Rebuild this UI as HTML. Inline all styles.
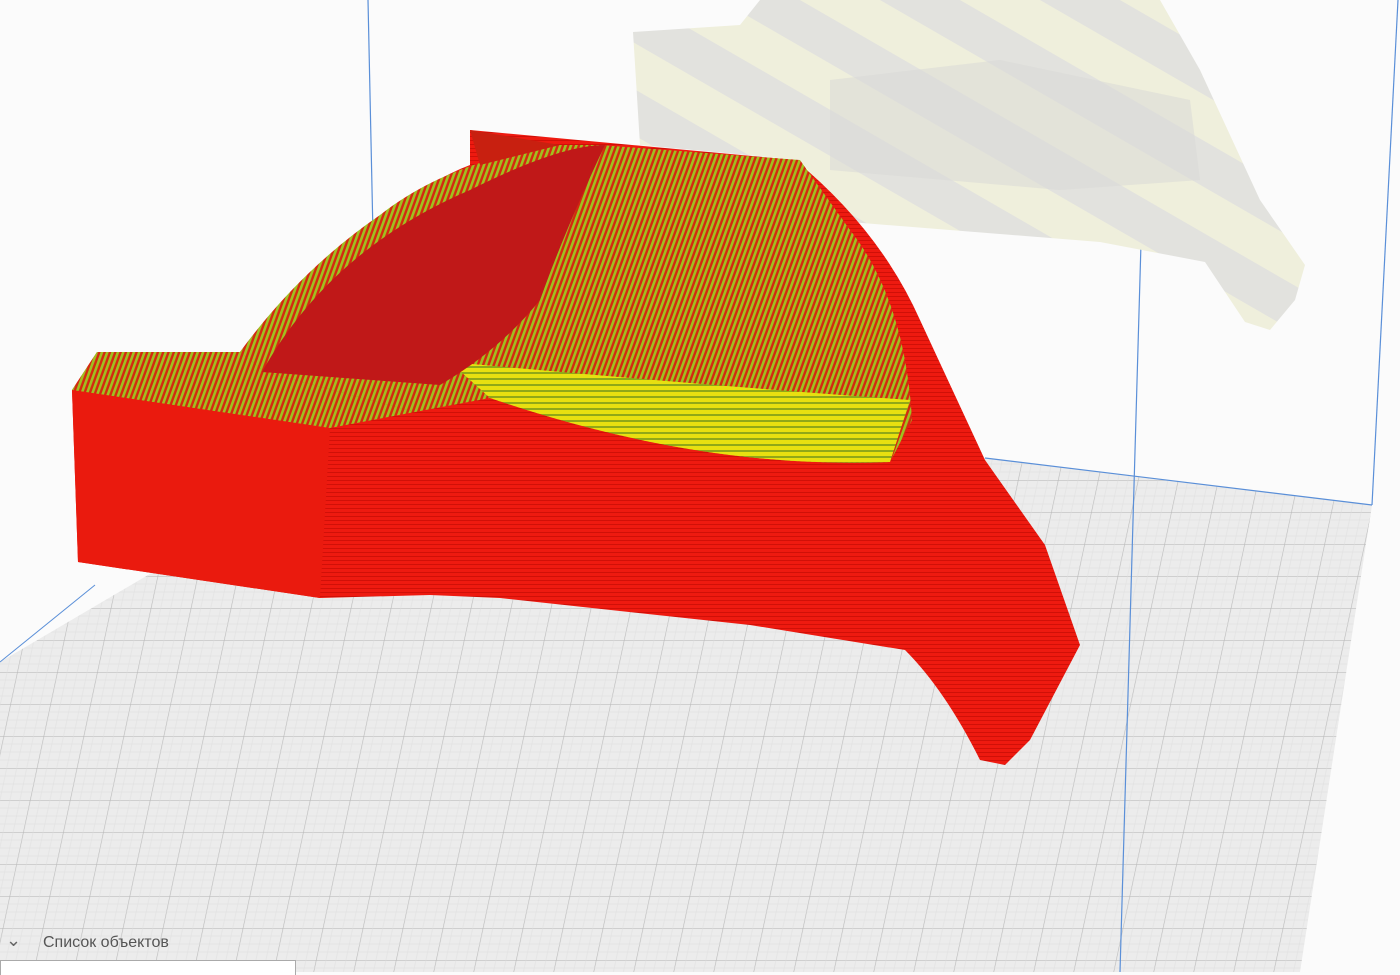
<!DOCTYPE html>
<html><head><meta charset="utf-8"><style>
html,body{margin:0;padding:0;width:1400px;height:972px;overflow:hidden;background:#fbfbfb;font-family:"Liberation Sans",sans-serif}
svg{position:absolute;left:0;top:0}
.lbl{position:absolute;left:43px;top:934px;font-size:16px;color:#555}
.chev{position:absolute;left:6px;top:930px;font-size:18px;color:#666}
.box{position:absolute;left:0;top:960px;width:294px;height:14px;border:1px solid #aaa;border-bottom:none;background:#fff}
</style></head><body>
<svg width="1400" height="972" viewBox="0 0 1400 972">
<defs>
<pattern id="grid" width="40" height="32" patternUnits="userSpaceOnUse" patternTransform="skewX(-12)">
<rect width="40" height="32" fill="#ececec"/>
<path d="M0 0H40M0 0V32" stroke="#bcbcbc" stroke-width="1.3"/>
<path d="M0 8H40M0 16H40M0 24H40M10 0V32M20 0V32M30 0V32" stroke="#dedede" stroke-width="0.5"/>
</pattern>
<pattern id="hatch" width="5" height="5" patternUnits="userSpaceOnUse" patternTransform="rotate(20)">
<rect width="5" height="5" fill="#d42810"/>
<rect width="2.6" height="5" fill="#a0c020"/>
</pattern>
<pattern id="yel" width="6" height="6" patternUnits="userSpaceOnUse">
<rect width="6" height="6" fill="#e8e010"/>
<rect width="6" height="2" fill="#90a818"/>
</pattern>
<pattern id="red" width="4" height="4" patternUnits="userSpaceOnUse">
<rect width="4" height="4" fill="#ee1a10"/>
<rect width="4" height="1" fill="#d01008"/>
</pattern>
<pattern id="ghost" width="80" height="80" patternUnits="userSpaceOnUse" patternTransform="rotate(-60)">
<rect width="80" height="80" fill="#e2e2de"/>
<rect width="40" height="80" fill="#efefdc"/>
</pattern>
</defs>
<polygon points="0,662 330,468 985,458 1372,505 1300,972 0,972" fill="url(#grid)"/>
<line x1="368" y1="0" x2="378" y2="470" stroke="#5a8fd8" stroke-width="1.2"/>
<line x1="1148" y1="0" x2="1120" y2="972" stroke="#5a8fd8" stroke-width="1.2"/>
<line x1="1398" y1="0" x2="1372" y2="505" stroke="#5a8fd8" stroke-width="1.2"/>
<line x1="985" y1="458" x2="1372" y2="505" stroke="#5a8fd8" stroke-width="1.2"/>
<line x1="0" y1="662" x2="95" y2="585" stroke="#5a8fd8" stroke-width="1"/>
<path d="M633,32 L740,25 L760,0 L1160,0 L1200,70 L1260,200 L1305,265 L1295,300 L1270,330 L1245,322 L1205,262 L1100,242 L850,222 L800,160 L640,145 Z" fill="url(#ghost)"/>
<path d="M830,80 L1000,60 L1190,100 L1200,180 L1060,190 L830,170 Z" fill="#d8d8d6" opacity="0.5"/>
<path d="M72,390 L97,352 L240,352 Q300,270 390,215 Q430,180 470,165 L470,130 L795,160 Q880,230 920,320 L985,460 L1045,545 L1080,645 L1030,740 L1005,765 L980,760 Q945,690 905,650 L750,625 L500,598 L430,595 L320,598 L78,562 Z" fill="url(#red)"/>
<path d="M72,390 L330,428 L320,598 L78,562 Z" fill="#ea1a0e"/>
<path d="M72,390 L97,352 L240,352 L265,372 L415,412 L330,428 Z" fill="url(#hatch)"/>
<path d="M240,352 L265,372 L415,412 L490,398 Q700,470 890,462 L912,420 Q905,300 850,230 L800,160 L600,145 L560,145 Q450,160 380,215 Q300,270 240,352 Z" fill="url(#hatch)"/>
<path d="M450,362 Q700,385 910,400 L890,462 Q700,470 490,398 Z" fill="url(#yel)"/>
<path d="M262,372 Q330,250 470,190 Q560,145 605,145 Q565,230 540,300 Q500,350 440,385 Z" fill="#c01818"/>
<path d="M470,130 L560,145 L480,165 Z" fill="#c82010"/>
</svg>
<div class="chev">&#8964;</div>
<div class="lbl">Список объектов</div>
<div class="box"></div>
</body></html>
